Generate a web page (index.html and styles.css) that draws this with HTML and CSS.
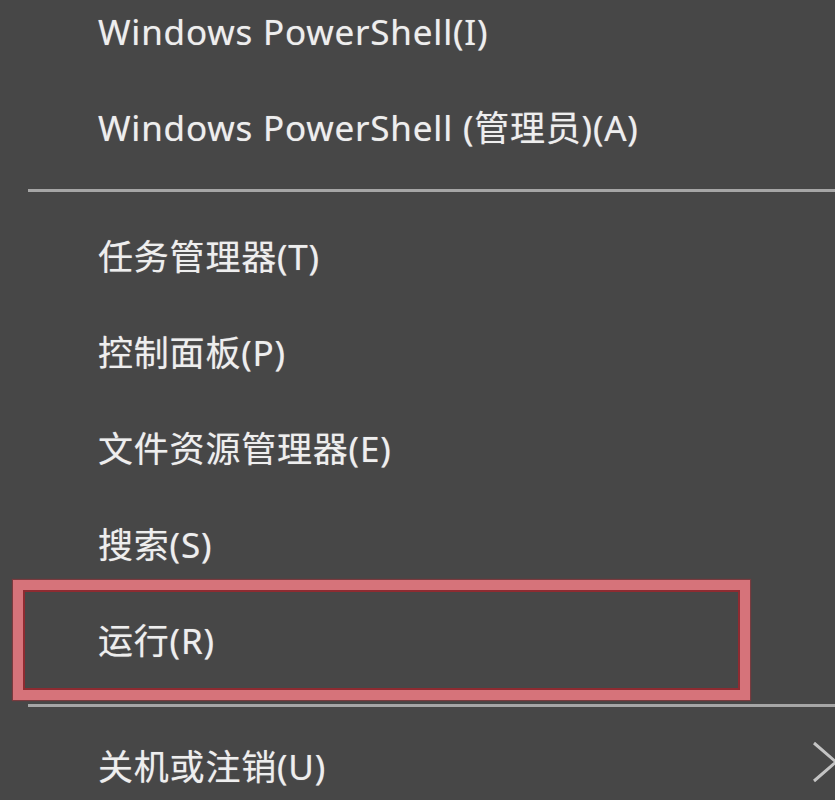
FILE: index.html
```html
<!DOCTYPE html>
<html lang="zh-CN">
<head>
<meta charset="utf-8">
<title>Win+X 菜单</title>
<link rel="stylesheet" href="styles.css">
</head>
<body>
<div class="menu">
  <div class="item"><span class="label">Windows PowerShell(I)</span></div>
  <div class="item"><span class="label">Windows PowerShell (管理员)(A)</span></div>
  <div class="sep sep-top"></div>
  <div class="item"><span class="label">任务管理器(T)</span></div>
  <div class="item"><span class="label">控制面板(P)</span></div>
  <div class="item"><span class="label">文件资源管理器(E)</span></div>
  <div class="item"><span class="label">搜索(S)</span></div>
  <div class="item item-marked"><span class="label">运行(R)</span></div>
  <div class="sep sep-bottom"></div>
  <div class="item item-sub">
    <span class="label">关机或注销(U)</span>
    <svg class="chevron" width="26" height="44" viewBox="0 0 26 44"><path d="M2 2 L24 21 L2 40" fill="none" stroke="#c4c4c4" stroke-width="3"/></svg>
  </div>
</div>
</body>
</html>
```
FILE: styles.css
```css
html, body {
  margin: 0;
  padding: 0;
}
body {
  background: #474747;
  width: 835px;
  height: 800px;
  overflow: hidden;
  font-family: "Noto Sans", "Noto Sans CJK SC", sans-serif;
  color: #eeeeee;
}
.menu {
  margin-top: -15px;
  display: flex;
  flex-direction: column;
}
.item {
  position: relative;
  height: 96px;
  box-sizing: border-box;
  padding-bottom: 4px;
  display: flex;
  align-items: center;
  padding-left: 98px;
  font-size: 35px;
  letter-spacing: 0.8px;
  white-space: nowrap;
}
.label {
  display: block;
  line-height: 1;
  text-shadow: 0 0 1px rgba(255, 255, 255, 0.45);
}
.sep {
  height: 3px;
  background: #a6a6a6;
}
.sep-top {
  margin: 12px 0 18px 28px;
}
.sep-bottom {
  margin: 14px 0 13px 28px;
}
.item-marked::after {
  content: "";
  position: absolute;
  left: 13px;
  top: -14px;
  width: 737px;
  height: 120px;
  box-sizing: border-box;
  border: 10px solid #d6737a;
  box-shadow: inset 0 0 0 2px #8e2b31, 0 0 1px 1px #7a3a3e;
}
.chevron {
  position: absolute;
  left: 812px;
  top: 21px;
}
```
